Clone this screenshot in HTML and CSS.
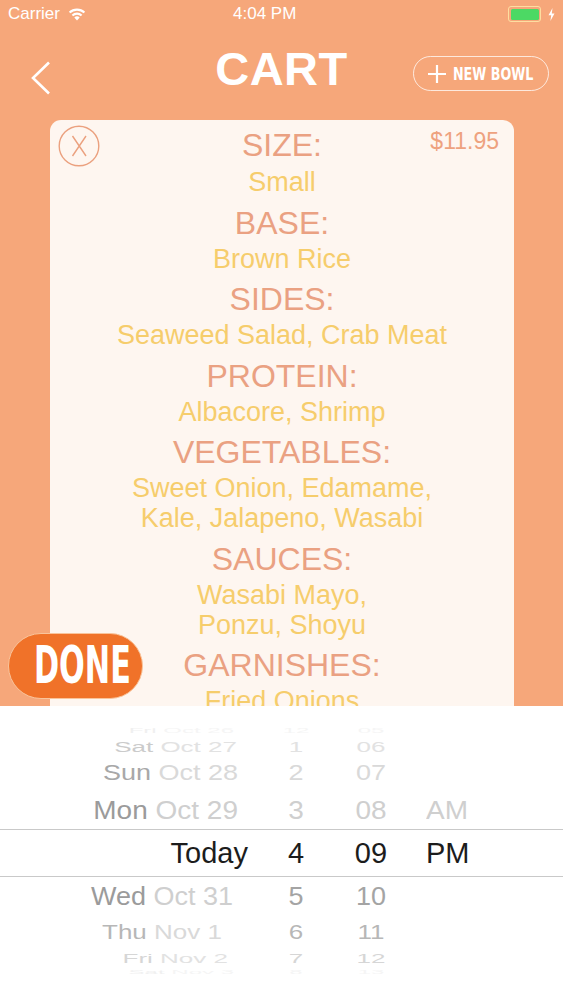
FILE: index.html
```html
<!DOCTYPE html>
<html lang="en">
<head>
    <meta charset="UTF-8">
    <meta name="viewport" content="width=device-width, initial-scale=1.0">
    <title>Cart</title>
    <link rel="stylesheet" href="styles.css">
</head>
<body>
    <div class="screen">
        <div class="status-bar">
            <div class="status-left">
                <span>Carrier</span>
                <svg class="wifi" width="18" height="13" viewBox="0 0 18 13">
                    <path d="M9 12.6 L6.3 9.5 A4 4 0 0 1 11.7 9.5 Z" fill="#fff"/>
                    <path d="M4.4 7.4 A6.8 6.8 0 0 1 13.6 7.4" stroke="#fff" stroke-width="2.1" fill="none"/>
                    <path d="M1.6 4.6 A10.6 10.6 0 0 1 16.4 4.6" stroke="#fff" stroke-width="2.1" fill="none"/>
                </svg>
            </div>
            <div class="status-time">4:04 PM</div>
            <div class="status-right">
                <div class="battery"><div class="battery-level"></div></div>
                <svg class="bolt" width="7" height="13" viewBox="0 0 7 13">
                    <path d="M4.5 0 L0.5 7.2 H3.2 L2.4 13 L6.5 5.6 H3.8 Z" fill="#fff"/>
                </svg>
            </div>
        </div>

        <div class="nav">
            <svg class="back-arrow" width="22" height="34" viewBox="0 0 22 34">
                <polyline points="19,1.5 3,17 19,32.5" fill="none" stroke="#fff" stroke-width="2.6"/>
            </svg>
            <h1 class="nav-title">CART</h1>
            <div class="nav-right">
                <button class="new-bowl">
                    <svg width="18" height="18" viewBox="0 0 18 18">
                        <path d="M9 0 V18 M0 9 H18" stroke="#fff" stroke-width="2.2"/>
                    </svg>
                    <span>NEW BOWL</span>
                </button>
            </div>
        </div>

        <div class="bowl-card">
            <div class="card-top">
                <svg class="remove-icon" width="42" height="42" viewBox="0 0 42 42">
                    <circle cx="21" cy="21" r="19.8" fill="none" stroke="#eba17f" stroke-width="1.4"/>
                    <path d="M14.5 11 L28 31 M28 11 L14.5 31" stroke="#eba17f" stroke-width="1.4"/>
                </svg>
                <div class="label">SIZE:</div>
                <div class="price">$11.95</div>
            </div>
            <div class="value">Small</div>

            <div class="section">
                <div class="label">BASE:</div>
                <div class="value">Brown Rice</div>
            </div>
            <div class="section">
                <div class="label">SIDES:</div>
                <div class="value">Seaweed Salad, Crab Meat</div>
            </div>
            <div class="section">
                <div class="label">PROTEIN:</div>
                <div class="value">Albacore, Shrimp</div>
            </div>
            <div class="section">
                <div class="label">VEGETABLES:</div>
                <div class="value">Sweet Onion, Edamame,<br>Kale, Jalapeno, Wasabi</div>
            </div>
            <div class="section">
                <div class="label">SAUCES:</div>
                <div class="value">Wasabi Mayo,<br>Ponzu, Shoyu</div>
            </div>
            <div class="section">
                <div class="label">GARNISHES:</div>
                <div class="value">Fried Onions</div>
            </div>
        </div>

        <button class="done-button"><span>DONE</span></button>

        <div class="picker">
            <div class="picker-row row-far">
                <div class="p-date"><span class="wd">Fri</span> Oct 26</div>
                <div class="p-hour">12</div>
                <div class="p-min">05</div>
                <div class="p-ampm"></div>
            </div>
            <div class="picker-row row-3 upper">
                <div class="p-date"><span class="wd">Sat</span> Oct 27</div>
                <div class="p-hour">1</div>
                <div class="p-min">06</div>
                <div class="p-ampm"></div>
            </div>
            <div class="picker-row row-2 upper">
                <div class="p-date"><span class="wd">Sun</span> Oct 28</div>
                <div class="p-hour">2</div>
                <div class="p-min">07</div>
                <div class="p-ampm"></div>
            </div>
            <div class="picker-row row-1 upper">
                <div class="p-date"><span class="wd">Mon</span> Oct 29</div>
                <div class="p-hour">3</div>
                <div class="p-min">08</div>
                <div class="p-ampm">AM</div>
            </div>
            <div class="picker-row row-selected">
                <div class="p-date">Today</div>
                <div class="p-hour">4</div>
                <div class="p-min">09</div>
                <div class="p-ampm">PM</div>
            </div>
            <div class="picker-row row-1 lower">
                <div class="p-date"><span class="wd">Wed</span> Oct 31</div>
                <div class="p-hour">5</div>
                <div class="p-min">10</div>
                <div class="p-ampm"></div>
            </div>
            <div class="picker-row row-2 lower">
                <div class="p-date"><span class="wd">Thu</span> Nov 1</div>
                <div class="p-hour">6</div>
                <div class="p-min">11</div>
                <div class="p-ampm"></div>
            </div>
            <div class="picker-row row-3 lower">
                <div class="p-date"><span class="wd">Fri</span> Nov 2</div>
                <div class="p-hour">7</div>
                <div class="p-min">12</div>
                <div class="p-ampm"></div>
            </div>
            <div class="picker-row row-far lower">
                <div class="p-date"><span class="wd">Sat</span> Nov 3</div>
                <div class="p-hour">8</div>
                <div class="p-min">13</div>
                <div class="p-ampm"></div>
            </div>
        </div>
    </div>
</body>
</html>
```

FILE: styles.css
```css
body {
    margin: 0;
    font-family: "Liberation Sans", Arial, sans-serif;
    background: #f6a77a;
}

.screen {
    position: relative;
    width: 563px;
    height: 1000px;
    overflow: hidden;
    background: #f6a77a;
}

/* status bar */
.status-bar {
    height: 28px;
    display: grid;
    grid-template-columns: 225px auto 1fr;
    align-items: center;
    padding: 0 8px;
    color: #fff;
    font-size: 17px;
}
.status-left {
    display: flex;
    align-items: center;
    gap: 8px;
}
.status-right {
    display: flex;
    justify-content: flex-end;
    align-items: center;
    gap: 7px;
}
.battery {
    width: 28px;
    height: 11px;
    padding: 1.5px;
    border: 1px solid rgba(255, 236, 170, 0.8);
    border-radius: 3px;
    box-sizing: content-box;
}
.battery-level {
    width: 100%;
    height: 100%;
    background: #4cd964;
    border-radius: 1.5px;
}

/* nav */
.nav {
    height: 84px;
    display: grid;
    grid-template-columns: 1fr auto 1fr;
    align-items: start;
    padding: 0 14px;
    margin-bottom: 8px;
}
.back-arrow {
    margin: 33px 0 0 16px;
}
.nav-title {
    margin: 18px 0 0;
    color: #fff;
    font-size: 47px;
    line-height: 46px;
    font-weight: bold;
    letter-spacing: 0.5px;
}
.nav-right {
    display: flex;
    justify-content: flex-end;
}
.new-bowl {
    margin-top: 28px;
    width: 136px;
    height: 35px;
    display: flex;
    align-items: center;
    gap: 7px;
    padding: 0 0 0 14px;
    background: none;
    border: 1px solid rgba(255, 255, 255, 0.75);
    border-radius: 18px;
    color: #fff;
    font-family: "DejaVu Sans Condensed", sans-serif;
    font-weight: bold;
    font-size: 17px;
}
.new-bowl span {
    display: inline-block;
    width: 80px;
    transform: scaleX(0.83);
    transform-origin: left center;
    white-space: nowrap;
    text-align: left;
}

/* card */
.bowl-card {
    margin: 0 49px 0 50px;
    height: 700px;
    padding: 4px 15px 0;
    background: #fef6f0;
    border-radius: 11px;
    text-align: center;
}
.card-top {
    display: grid;
    grid-template-columns: 1fr auto 1fr;
    align-items: start;
}
.remove-icon {
    margin: 1px 0 0 -7px;
}
.price {
    justify-self: end;
    margin-top: 6px;
    color: #eea27f;
    font-size: 23px;
    line-height: 23px;
}
.label {
    color: #eaa182;
    font-size: 32px;
    line-height: 42px;
}
.value {
    color: #f6cd6c;
    font-size: 27px;
    line-height: 30px;
}
.section {
    margin-top: 4.5px;
}

/* done */
.done-button {
    position: absolute;
    left: 8px;
    top: 633px;
    width: 135px;
    height: 66px;
    border: 1.5px solid #f9c49b;
    border-radius: 33px;
    background: #f07229;
    color: #fff;
    padding: 0;
    font-family: "DejaVu Sans Condensed", sans-serif;
    font-weight: bold;
    font-size: 51px;
    line-height: 52px;
}
.done-button span {
    display: inline-block;
    transform: scaleX(0.66);
}

/* date picker */
.picker {
    position: absolute;
    left: 0;
    right: 0;
    top: 706px;
    bottom: 0;
    background: #fff;
    padding-top: 18px;
}
.picker-row {
    display: grid;
    grid-template-columns: 248px 96px 54px 1fr;
    white-space: nowrap;
}
.p-date {
    text-align: right;
}
.p-hour,
.p-min {
    text-align: center;
}
.p-ampm {
    padding-left: 28px;
}

.row-selected {
    height: 46px;
    line-height: 46px;
    border-top: 1px solid #c9c9c9;
    border-bottom: 1px solid #c9c9c9;
    color: #1c1c1c;
    font-size: 29px;
}

.row-1 {
    height: 39px;
    line-height: 39px;
    font-size: 28px;
    color: #cfcfcf;
}
.row-1 > div {
    transform: scaleY(0.95);
}
.row-1 .p-date {
    padding-right: 10px;
}
.row-1 .wd {
    color: #9b9b9b;
}
.row-1.lower {
    height: 38px;
    line-height: 38px;
    font-size: 27px;
}
.row-1.lower .p-date {
    padding-right: 15px;
}
.row-1.lower .p-hour,
.row-1.lower .p-min {
    color: #a4a4a4;
}

.row-2 {
    height: 33px;
    line-height: 33px;
    font-size: 27px;
    color: #d9d9d9;
}
.row-2 > div {
    transform: scaleY(0.8);
}
.row-2 .p-date {
    padding-right: 10px;
}
.row-2 .wd {
    color: #a8a8a8;
}
.row-2.lower {
    height: 35px;
    line-height: 35px;
    font-size: 26px;
}
.row-2.lower .p-date {
    padding-right: 26px;
}
.row-2.lower .wd,
.row-2.lower .p-hour,
.row-2.lower .p-min {
    color: #b7b7b7;
}

.row-3 {
    height: 19px;
    line-height: 19px;
    font-size: 26px;
    color: #e2e2e2;
}
.row-3 > div {
    transform: scaleY(0.55);
}
.row-3 .p-date {
    padding-right: 11px;
}
.row-3 .wd {
    color: #cbcbcb;
}
.row-3.lower {
    height: 17px;
    line-height: 17px;
}
.row-3.lower > div {
    transform: scaleY(0.5);
}
.row-3.lower .p-date {
    padding-right: 20px;
}
.row-3.lower .wd,
.row-3.lower .p-hour,
.row-3.lower .p-min {
    color: #d6d6d6;
}

.row-far {
    height: 14px;
    line-height: 14px;
    font-size: 24px;
    color: #f5f5f5;
}
.row-far > div {
    transform: scaleY(0.3);
}
.row-far .wd {
    color: #f0f0f0;
}
.row-far .p-date {
    padding-right: 14px;
}
.row-far.lower {
    height: 10px;
    line-height: 10px;
}
.row-far.lower > div {
    transform: scaleY(0.22);
}
```
